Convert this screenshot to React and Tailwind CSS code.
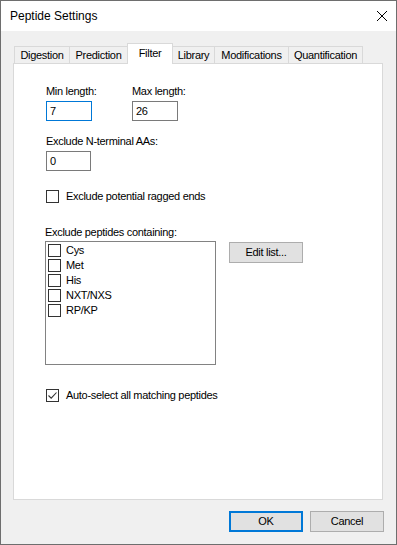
import React from "react";

const tabs = [
  { name: "Digestion", w: "w-[56px]" },
  { name: "Prediction", w: "w-[59px]" },
  { name: "Filter", w: "w-[46px]", active: true },
  { name: "Library", w: "w-[43px]" },
  { name: "Modifications", w: "w-[75px]" },
  { name: "Quantification", w: "w-[75px]" },
];

const excludes = ["Cys", "Met", "His", "NXT/NXS", "RP/KP"];

function Box({ checked }) {
  return (
    <span className="w-[13px] h-[13px] border border-[#333333] bg-white flex items-center justify-center shrink-0">
      {checked && (
        <svg width="11" height="11" viewBox="0 0 11 11">
          <path d="M1.5 5.5 L4.2 8.2 L9.5 2.5" fill="none" stroke="#333" strokeWidth="1.1" />
        </svg>
      )}
    </span>
  );
}

function Field({ value, focused, w }) {
  return (
    <div
      className={`${w} h-[20px] bg-white border flex items-center pl-[3px] ${
        focused ? "border-[#0078d7]" : "border-[#7a7a7a]"
      }`}
    >
      {value}
    </div>
  );
}

export default function App() {
  return (
    <div
      className="w-[397px] h-[545px] border border-[#6e6e6e] bg-[#f0f0f0] flex flex-col text-black text-[11px] leading-[13px] tracking-[-0.3px]"
      style={{ fontFamily: '"Liberation Sans", Arial, sans-serif' }}
    >
      {/* title bar */}
      <div className="h-[30px] bg-white flex items-center justify-between pl-[9px] pr-[9px] shrink-0">
        <span className="text-[12px] tracking-normal">Peptide Settings</span>
        <svg width="10" height="10" viewBox="0 0 10 10">
          <path d="M0 0 L10 10 M10 0 L0 10" stroke="#000" strokeWidth="1" />
        </svg>
      </div>

      <div className="px-[12px] pt-[12px] flex flex-col">
        {/* tabs */}
        <div className="h-[20px] flex items-end pl-[2px]">
          {tabs.map((t) =>
            t.active ? (
              <div
                key={t.name}
                className={`${t.w} h-[21px] -mb-px -ml-px relative z-10 bg-white border border-b-0 border-[#d9d9d9] flex justify-center pt-[3px]`}
              >
                {t.name}
              </div>
            ) : (
              <div
                key={t.name}
                className={`${t.w} h-[17px] -ml-px bg-[#f0f0f0] border border-b-0 border-[#d9d9d9] flex justify-center items-center pt-px`}
              >
                {t.name}
              </div>
            )
          )}
        </div>

        {/* panel */}
        <div className="w-[370px] h-[437px] bg-white border border-[#d9d9d9] pl-[32px] flex flex-col">
          <div className="flex mt-[21px]">
            <div className="w-[86px] flex flex-col gap-[3px]">
              <span>Min length:</span>
              <Field value="7" focused w="w-[46px]" />
            </div>
            <div className="flex flex-col gap-[3px]">
              <span>Max length:</span>
              <Field value="26" w="w-[46px]" />
            </div>
          </div>

          <div className="flex flex-col gap-[3px] mt-[14px]">
            <span>Exclude N-terminal AAs:</span>
            <Field value="0" w="w-[45px]" />
          </div>

          <label className="flex items-center mt-[19px]">
            <Box />
            <span className="ml-[7px]">Exclude potential ragged ends</span>
          </label>

          <span className="mt-[23px] -ml-px">Exclude peptides containing:</span>
          <div className="flex mt-[2px] -ml-px">
            <div className="w-[171px] h-[124px] border border-[#828282] bg-white pt-px pl-[2px] flex flex-col">
              {excludes.map((e) => (
                <div key={e} className="h-[15px] flex items-center">
                  <Box />
                  <span className="ml-[5px]">{e}</span>
                </div>
              ))}
            </div>
            <button className="ml-[13px] mt-[1px] w-[74px] h-[21px] bg-[#e1e1e1] border border-[#adadad] flex items-center justify-center">
              Edit list...
            </button>
          </div>

          <label className="flex items-center mt-[24px]">
            <Box checked />
            <span className="ml-[7px]">Auto-select all matching peptides</span>
          </label>
        </div>

        {/* buttons */}
        <div className="flex justify-end gap-[7px] mt-[11px]">
          <button className="w-[74px] h-[21px] bg-[#e1e1e1] border-2 border-[#0078d7] flex items-center justify-center">
            OK
          </button>
          <button className="w-[74px] h-[21px] bg-[#e1e1e1] border border-[#adadad] flex items-center justify-center">
            Cancel
          </button>
        </div>
      </div>
    </div>
  );
}
